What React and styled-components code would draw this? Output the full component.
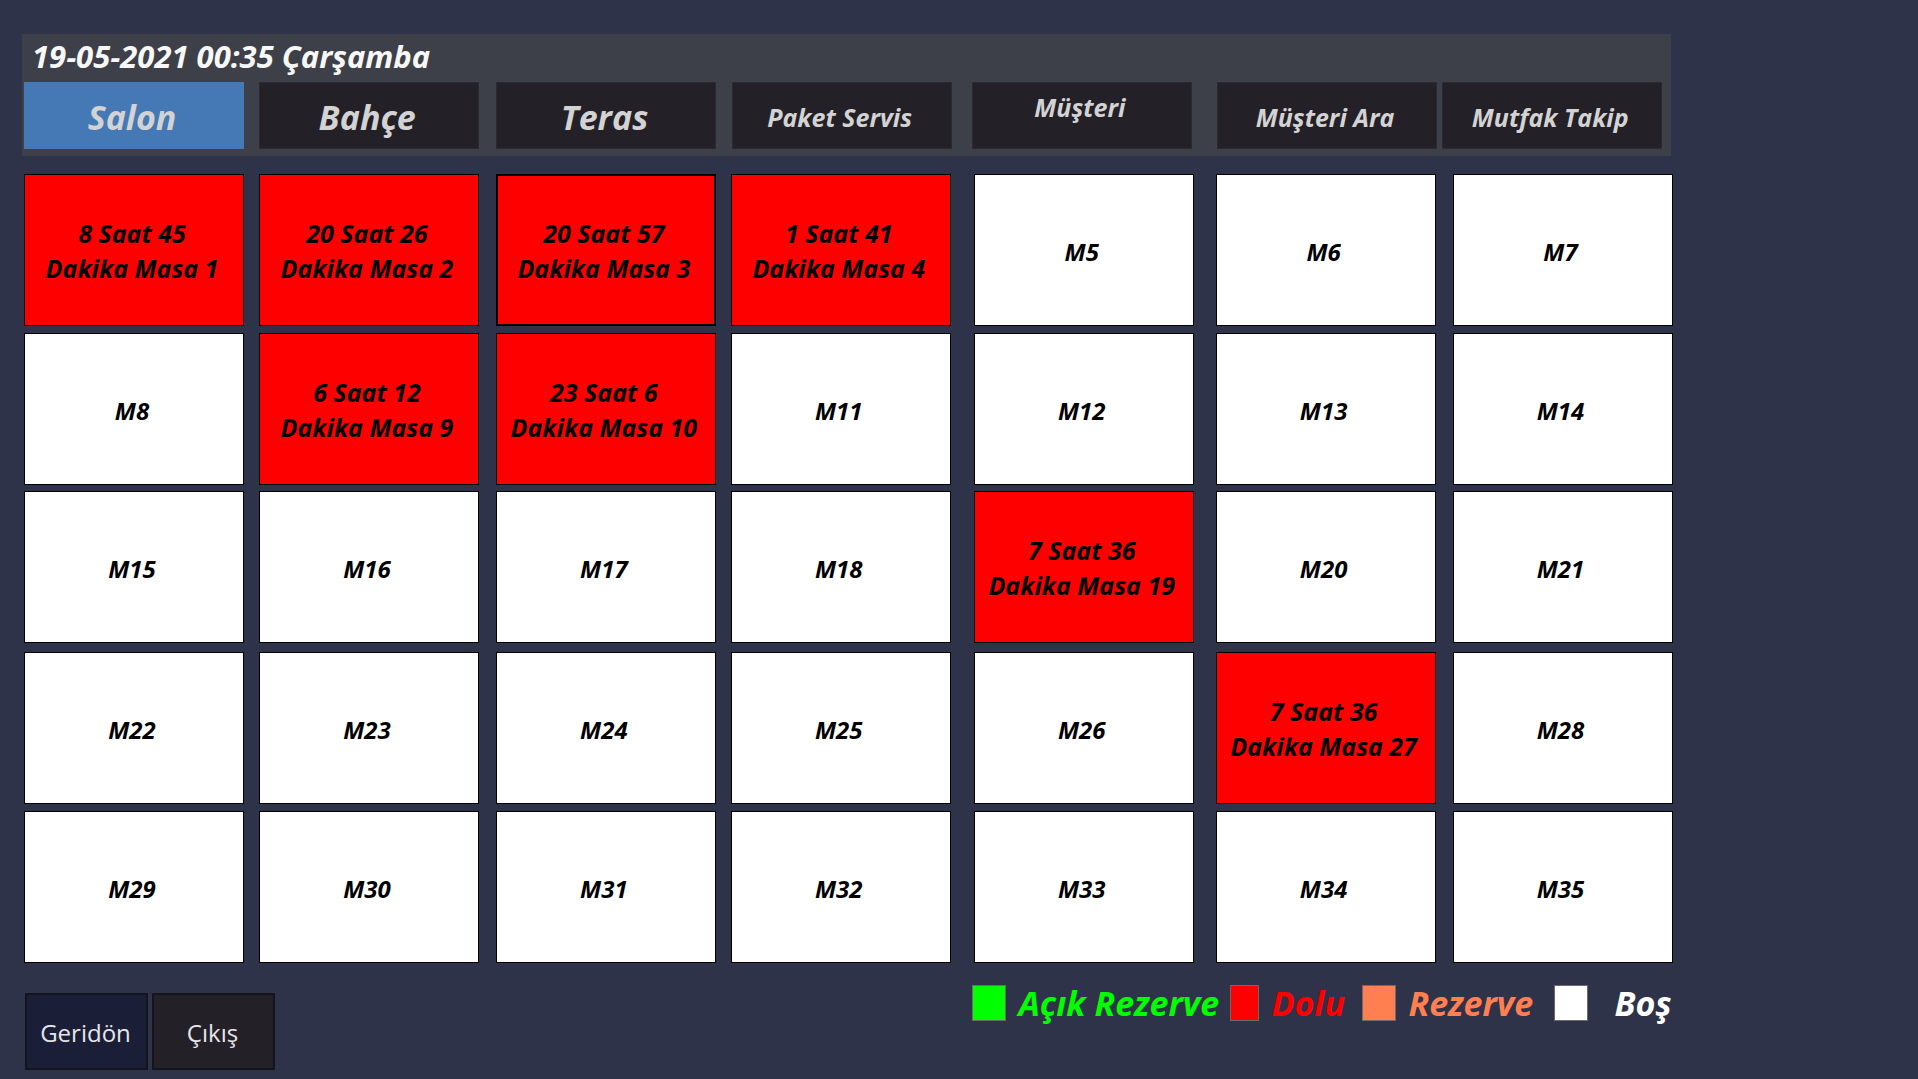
import React, { useState } from "react";
import styled, { createGlobalStyle } from "styled-components";

const GlobalStyle = createGlobalStyle`
  * { box-sizing: border-box; }
  body {
    margin: 0;
    background: #2f3349;
    font-family: "Open Sans", "Noto Sans", sans-serif;
  }
  button { font-family: inherit; margin: 0; cursor: pointer; }
`;

const Page = styled.main`
  width: 86%;
  margin-left: 22px;
  padding-top: 34px;
`;

const Header = styled.header`
  background: #3d4049;
  padding: 4px 8px 7px 2px;
`;

const Clock = styled.h1`
  margin: 0;
  padding-left: 8px;
  font-size: 31px;
  line-height: 36px;
  padding-bottom: 8px;
  font-weight: 700;
  font-style: italic;
  color: #f7f7f7;
`;

const Tabs = styled.nav`
  display: grid;
  grid-template-columns: 235fr 237fr 235fr 240fr 245fr 225fr 221fr;
`;

const Tab = styled.button`
  width: 220px;
  max-width: 100%;
  height: 67px;
  padding: ${(p) => (p.$raised ? "0 4px 18px 0" : "2px 4px 0 0")};
  border: 1px solid ${(p) => (p.$active ? "#4579b6" : "#2c2a31")};
  background: ${(p) => (p.$active ? "#4579b6" : "#242027")};
  color: #d3d3d3;
  font-size: ${(p) => (p.$large ? 34 : 25)}px;
  line-height: 36px;
  font-weight: 700;
  font-style: italic;
  white-space: nowrap;
`;

const Tables = styled.section`
  display: grid;
  grid-template-columns: 235fr 237fr 235fr 243fr 242fr 237fr 221fr;
  grid-template-rows: 159px 158px 161px 159px 152px;
  margin: 18px -2px 0 2px;
`;

const Table = styled.button`
  width: 220px;
  max-width: 100%;
  height: 152px;
  padding: 2px 4px 0 0;
  border: ${(p) => (p.$focused ? 2 : 1)}px solid #000;
  background: ${(p) => (p.$busy ? "#ff0000" : "#ffffff")};
  color: #000;
  font-size: ${(p) => (p.$busy ? 25 : 24)}px;
  line-height: 35px;
  font-weight: 700;
  font-style: italic;
`;

const Line = styled.span`
  display: block;
  white-space: nowrap;
`;

const Footer = styled.footer`
  display: flex;
  justify-content: space-between;
  align-items: flex-start;
  padding: 22px 0 9px 3px;
`;

const Actions = styled.div`
  display: flex;
  gap: 4px;
  padding-top: 8px;
`;

const Action = styled.button`
  width: 123px;
  height: 77px;
  padding: 2px 2px 0 0;
  border: 2px solid #14141c;
  background: ${(p) => (p.$primary ? "#1a1e37" : "#242027")};
  color: #e6e6ea;
  font-size: 24px;
`;

const Legend = styled.ul`
  display: grid;
  grid-template-columns: 258fr 132fr 192fr 117fr;
  width: 699px;
  margin: 0;
  padding: 0;
  list-style: none;
`;

const LegendItem = styled.li`
  display: flex;
  align-items: center;
  justify-content: ${(p) => (p.$spread ? "space-between" : "flex-start")};
  gap: 12px;
  height: 36px;
  color: ${(p) => p.$color};
  font-size: 34px;
  font-weight: 700;
  font-style: italic;
  white-space: nowrap;
`;

const Swatch = styled.span`
  flex: none;
  width: ${(p) => (p.$narrow ? 29 : 34)}px;
  height: 36px;
  border: 1px solid #6b6b6b;
  background: currentColor;
`;

const tabs = [
  { label: "Salon", large: true },
  { label: "Bahçe", large: true },
  { label: "Teras", large: true },
  { label: "Paket Servis" },
  { label: "Müşteri", raised: true },
  { label: "Müşteri Ara" },
  { label: "Mutfak Takip" },
];

const occupied = {
  1: "8 Saat 45",
  2: "20 Saat 26",
  3: "20 Saat 57",
  4: "1 Saat 41",
  9: "6 Saat 12",
  10: "23 Saat 6",
  19: "7 Saat 36",
  27: "7 Saat 36",
};

const legend = [
  { label: "Açık Rezerve", color: "#00ff00" },
  { label: "Dolu", color: "#ff0000", narrow: true },
  { label: "Rezerve", color: "#ff7f50" },
  { label: "Boş", color: "#ffffff", spread: true },
];

export default function App() {
  const [active, setActive] = useState("Salon");
  const [focused, setFocused] = useState(3);
  const numbers = Array.from({ length: 35 }, (_, i) => i + 1);

  return (
    <>
      <GlobalStyle />
      <Page>
        <Header>
          <Clock>19-05-2021 00:35 Çarşamba</Clock>
          <Tabs>
            {tabs.map((t) => (
              <Tab
                key={t.label}
                type="button"
                $large={t.large}
                $raised={t.raised}
                $active={t.label === active}
                onClick={() => setActive(t.label)}
              >
                {t.label}
              </Tab>
            ))}
          </Tabs>
        </Header>
        <Tables>
          {numbers.map((n) => (
            <Table
              key={n}
              type="button"
              $busy={n in occupied}
              $focused={n === focused}
              onClick={() => setFocused(n)}
            >
              {n in occupied ? (
                <>
                  <Line>{occupied[n]}</Line>
                  <Line>Dakika Masa {n}</Line>
                </>
              ) : (
                `M${n}`
              )}
            </Table>
          ))}
        </Tables>
        <Footer>
          <Actions>
            <Action type="button" $primary>Geridön</Action>
            <Action type="button">Çıkış</Action>
          </Actions>
          <Legend>
            {legend.map((l) => (
              <LegendItem key={l.label} $color={l.color} $spread={l.spread}>
                <Swatch $narrow={l.narrow} />
                {l.label}
              </LegendItem>
            ))}
          </Legend>
        </Footer>
      </Page>
    </>
  );
}
